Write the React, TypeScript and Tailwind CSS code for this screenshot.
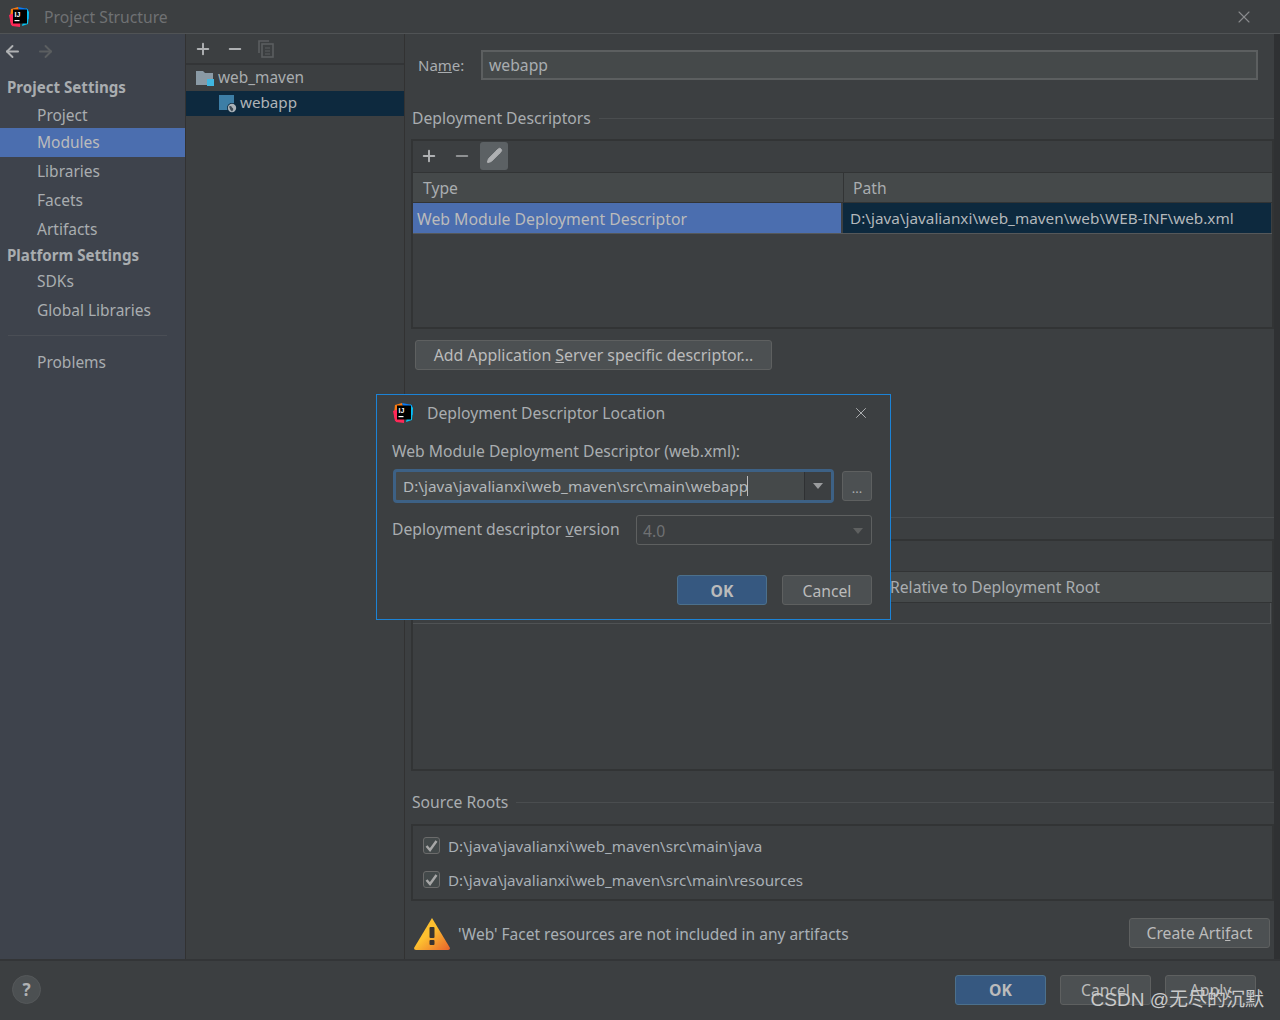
import { ArrowLeft, ArrowRight, Minus, Pencil, Plus, X } from "lucide-react";

const FONT = { fontFamily: '"Noto Sans", "Noto Sans CJK SC", sans-serif' };

function IjLogo({ size = 22 }: { size?: number }) {
  return (
    <svg width={size} height={size} viewBox="0 0 22 22">
      <path d="M3 3 L10 1 L12 8 L2 12 Z" fill="#f97a12" />
      <path d="M10 1 L20 3 L21 13 L14 10 Z" fill="#087cfa" />
      <path d="M18 2 L21 6 L20 18 L14 20 Z" fill="#07c3f2" />
      <path d="M1 9 L9 6 L10 20 L3 19 Z" fill="#fe2857" />
      <path d="M2 14 L12 15 L12 21 L4 20 Z" fill="#fe2857" />
      <rect x="5" y="3.5" width="14" height="14" fill="#000" />
      <text x="6.5" y="10.5" fontSize="7" fontWeight="700" fill="#fff" fontFamily="Liberation Sans, sans-serif">IJ</text>
      <rect x="6.5" y="14" width="5" height="1.2" fill="#fff" />
    </svg>
  );
}

function Btn({ children, primary, className = "" }: { children: React.ReactNode; primary?: boolean; className?: string }) {
  return (
    <div
      className={`flex h-[30px] items-center justify-center rounded-[3px] border text-[15.7px] ${
        primary
          ? "border-[#4c708c] bg-[#365880] font-bold text-[#bbbbbb]"
          : "border-[#5e6060] bg-[#4c5052] text-[#bbbbbb]"
      } ${className}`}
    >
      {children}
    </div>
  );
}

function NavItem({ label, active, className = "h-[29px] pb-[2px]" }: { label: string; active?: boolean; className?: string }) {
  return (
    <div className={`flex items-center pl-[37px] text-[15.5px] ${className} ${active ? "bg-[#4b6eaf] text-[#bbbbbb]" : "text-[#a9adb0]"}`}>
      {label}
    </div>
  );
}

function NavHeader({ label, className }: { label: string; className: string }) {
  return <div className={`flex items-center pl-[7px] text-[15.1px] font-bold text-[#a9adb0] ${className}`}>{label}</div>;
}

function SectionTitle({ label }: { label: string }) {
  return (
    <div className="flex h-[22px] items-center gap-[8px] text-[15.7px] text-[#a9adb0]">
      <span className="whitespace-nowrap">{label}</span>
      <div className="h-px flex-1 bg-[#4a4d4f]" />
    </div>
  );
}

function SourceRoot({ path }: { path: string }) {
  return (
    <div className="flex h-[34px] items-center gap-[8px] pl-[10px] text-[15.2px] text-[#a9b0b6]">
      <span className="flex h-[17px] w-[17px] items-center justify-center rounded-[3px] border border-[#6b6b6b] bg-[#43494a]">
        <svg width="13" height="13" viewBox="0 0 13 13" fill="none" stroke="#a7a7a7" strokeWidth="2.4">
          <path d="M1.5 7 L5 11 L11.5 2" />
        </svg>
      </span>
      <span className="pt-[1px]">{path}</span>
    </div>
  );
}

export default function App() {
  return (
    <div style={FONT} className="relative flex h-[1020px] w-[1280px] flex-col overflow-hidden bg-[#3c3f41] leading-[22px] text-[#bbbbbb]">
      {/* title bar */}
      <div className="flex h-[34px] shrink-0 items-center border-b border-[#505355] bg-[#3c3f41] pl-[8px] pr-[26px]">
        <IjLogo />
        <span className="ml-[14px] text-[15.7px] text-[#6f7173]">Project Structure</span>
        <X size={20} strokeWidth={1.3} className="ml-auto text-[#8a8c8e]" />
      </div>

      <div className="flex min-h-0 flex-1">
        {/* left nav */}
        <div className="flex w-[186px] shrink-0 flex-col border-r border-[#323232] bg-[#3e434c]">
          <div className="flex h-[35px] items-center gap-[14px] pl-[3px]">
            <ArrowLeft size={19} strokeWidth={2.4} className="text-[#afb1b3]" />
            <ArrowRight size={19} strokeWidth={2.4} className="text-[#5b5e60]" />
          </div>
          <div className="mt-[5px]">
            <NavHeader label="Project Settings" className="h-[26px]" />
            <NavItem label="Project" className="h-[28px] pt-[1px]" />
            <NavItem label="Modules" active />
            <NavItem label="Libraries" />
            <NavItem label="Facets" />
            <NavItem label="Artifacts" />
            <NavHeader label="Platform Settings" className="h-[22px]" />
            <div className="pt-[1px]">
              <NavItem label="SDKs" />
              <NavItem label="Global Libraries" />
            </div>
            <div className="ml-[8px] mr-[18px] mt-[10px] h-px bg-[#4a4e55]" />
            <div className="mt-[11px]"><NavItem label="Problems" className="h-[29px]" /></div>
          </div>
        </div>

        {/* module tree */}
        <div className="flex w-[219px] shrink-0 flex-col border-r border-[#323232]">
          <div className="flex h-[31px] items-center gap-[14px] border-b-2 border-[#333537] pl-[8px] pt-[1px]">
            <Plus size={18} strokeWidth={2.6} className="text-[#afb1b3]" />
            <Minus size={18} strokeWidth={2.6} className="text-[#afb1b3]" />
            <svg width="16" height="18" viewBox="0 0 16 18" fill="none" stroke="#5b5e60" strokeWidth="1.6">
              <path d="M1 13 V1 H11" />
              <rect x="4" y="4" width="11" height="13" />
              <path d="M7 8 H12 M7 11 H12 M7 14 H12" strokeWidth="1.2" />
            </svg>
          </div>
          <div className="flex h-[26px] items-center pl-[9px] text-[15.4px] text-[#a9adb0]">
            <svg width="22" height="18" viewBox="0 0 22 18" className="mr-[1px] shrink-0">
              <path d="M1 2 H8 L10 4 H18 V16 H1 Z" fill="#8a9aa5" />
              <rect x="12" y="10" width="7" height="7" fill="#40b6e0" />
            </svg>
            <span>web_maven</span>
          </div>
          <div className="flex h-[25px] items-center bg-[#0d293e] pl-[33px] text-[15.2px] text-[#b0b4b7]">
            <svg width="19" height="19" viewBox="0 0 19 19" className="mr-[2px] shrink-0">
              <rect x="0" y="1" width="15" height="15" fill="#3d7ea6" />
              <circle cx="13" cy="14" r="5" fill="#0d293e" />
              <circle cx="13" cy="14" r="4.2" fill="#aab2b8" />
              <path d="M10 12.5 Q12.5 11 13 13.5 Q15.5 15 13 17.5 Q11 16 10 12.5 Z" fill="#3d4a55" />
            </svg>
            <span className="pb-[4px]">webapp</span>
          </div>
        </div>

        {/* detail panel */}
        <div className="flex w-[869px] shrink-0 flex-col pl-[7px]">
          <div className="mt-[16px] flex items-center pl-[6px]">
            <span className="w-[63px] text-[15px] text-[#a9adb0]">
              Na<span className="underline">m</span>e:
            </span>
            <div className="flex h-[30px] w-[777px] items-center border-2 border-[#5c5f60] bg-[#45494a] pl-[6px] text-[15.7px] text-[#a9adb0]">
              webapp
            </div>
          </div>

          <div className="mt-[27px]">
            <SectionTitle label="Deployment Descriptors" />
          </div>

          <div className="-ml-px mt-[10px] flex h-[190px] flex-col border-2 border-[#323435]">
            <div className="flex h-[32px] shrink-0 items-center border-b border-[#323435] pb-[2px] pl-[7px]">
              <Plus size={18} strokeWidth={2.6} className="text-[#afb1b3]" />
              <Minus size={18} strokeWidth={2.6} className="ml-[15px] text-[#8f9193]" />
              <span className="ml-[9px] flex h-[28px] w-[28px] items-center justify-center rounded-[3px] bg-[#5c6164]">
                <Pencil size={17} fill="#afb1b3" strokeWidth={1.4} className="text-[#afb1b3]" />
              </span>
            </div>
            <div className="flex h-[30px] shrink-0 border-b border-[#323435] bg-[#45494a] text-[15.7px] text-[#a9adb0]">
              <div className="flex w-[431px] items-center border-r border-[#323435] pl-[10px]">Type</div>
              <div className="flex flex-1 items-center pl-[9px]">Path</div>
            </div>
            <div className="flex h-[31px] shrink-0 border-b border-[#55585a]">
              <div className="flex w-[428px] items-center bg-[#4b6eaf] pl-[4px] pt-[1px] text-[15.8px] text-[#bbbbbb]">Web Module Deployment Descriptor</div>
              <div className="ml-[2px] mr-px flex flex-1 items-center bg-[#0d293e] pb-[1px] pl-[7px] text-[15.3px] text-[#b4b8bb]">
                D:\java\javalianxi\web_maven\web\WEB-INF\web.xml
              </div>
            </div>
          </div>

          <Btn className="ml-[3px] mt-[11px] w-[357px]">
            <span className="text-[15.9px]">
              Add Application <span className="underline">S</span>erver specific descriptor...
            </span>
          </Btn>

          {/* title of this section is hidden by the dialog, only its rule shows */}
          <div className="mt-[136px] flex h-[22px] items-center">
            <div className="h-px flex-1 bg-[#4a4d4f]" />
          </div>

          <div className="-ml-px mt-[11px] flex h-[232px] flex-col border-2 border-[#323435]">
            <div className="h-[31px] shrink-0 border-b border-[#323435]" />
            <div className="flex h-[31px] shrink-0 border-b border-[#323435] bg-[#45494a] text-[15.7px] text-[#a9adb0]">
              <div className="w-[476px]" />
              <div className="flex flex-1 items-center pl-[1px]">Relative to Deployment Root</div>
            </div>
            <div className="mr-px h-[21px] shrink-0 border-b border-r border-[#4f5254]" />
          </div>

          <div className="mt-[20px]">
            <SectionTitle label="Source Roots" />
          </div>

          <div className="-ml-px mt-[11px] flex h-[77px] flex-col justify-center border-2 border-[#323435]">
            <SourceRoot path="D:\java\javalianxi\web_maven\src\main\java" />
            <SourceRoot path="D:\java\javalianxi\web_maven\src\main\resources" />
          </div>

          <div className="mt-[16px] flex h-[33px] items-center pl-[2px]">
            <svg width="36" height="33" viewBox="0 0 36 33">
              <defs>
                <linearGradient id="warn" x1="0" y1="0" x2="1" y2="1">
                  <stop offset="0.45" stopColor="#fdc02f" />
                  <stop offset="1" stopColor="#e8622c" />
                </linearGradient>
              </defs>
              <path d="M18 1 L36 31 Q36 33 34 33 H2 Q0 33 0 31 Z" fill="url(#warn)" />
              <rect x="15.5" y="10" width="5" height="11" rx="1" fill="#3a3430" />
              <rect x="15.5" y="23" width="5" height="5" rx="1" fill="#3a3430" />
            </svg>
            <span className="ml-[8px] pt-[1px] text-[15.5px] text-[#a9b0b6]">'Web' Facet resources are not included in any artifacts</span>
            <Btn className="mb-[1px] ml-auto mr-[4px] w-[141px]">
              <span>
                Create Arti<span className="underline">f</span>act
              </span>
            </Btn>
          </div>
        </div>

        {/* window behind */}
        <div className="min-w-0 flex-1 bg-[#2f3133]" />
      </div>

      {/* footer */}
      <div className="flex h-[61px] shrink-0 items-center border-t-2 border-[#333537] pb-[2px] pl-[12px] pr-[24px]">
        <div className="flex h-[29px] w-[29px] items-center justify-center rounded-full border border-[#55585a] bg-[#4c5052] text-[17px] font-bold text-[#b0b2b4]">
          ?
        </div>
        <Btn primary className="ml-auto w-[91px]">OK</Btn>
        <Btn className="ml-[14px] w-[91px]">Cancel</Btn>
        <Btn className="ml-[14px] w-[91px]">Apply</Btn>
      </div>

      {/* dialog */}
      <div className="absolute left-[376px] top-[394px] flex h-[226px] w-[515px] flex-col border border-[#1c83d6] bg-[#3c3f41] pl-[15px] pr-[18px]">
        <div className="mt-[6px] flex h-[24px] items-center">
          <IjLogo />
          <span className="ml-[13px] text-[15.7px] text-[#a9adb0]">Deployment Descriptor Location</span>
          <X size={18} strokeWidth={1.3} className="ml-auto mr-[2px] text-[#afb1b3]" />
        </div>
        <div className="mt-[16px] text-[15.7px] leading-[20px] text-[#a9adb0]">Web Module Deployment Descriptor (web.xml):</div>
        <div className="mt-[8px] flex items-center">
          <div className="ml-px flex h-[34px] w-[441px] items-center rounded-[4px] border-[3px] border-[#3d6185] bg-[#45494a] text-[15.3px] text-[#b4b8bb]">
            <span className="flex flex-1 items-center pl-[7px]">
              D:\java\javalianxi\web_maven\src\main\webapp<span className="-ml-px inline-block h-[20px] border-l border-[#bbbbbb]" />
            </span>
            <span className="flex h-full w-[27px] items-center justify-center border-l border-[#2f3133] bg-[#3c3f41]">
              <span className="h-0 w-0 border-x-[5px] border-t-[6px] border-x-transparent border-t-[#9a9c9e]" />
            </span>
          </div>
          <div className="ml-[8px] flex h-[30px] w-[30px] items-center justify-center rounded-[3px] border border-[#5e6060] bg-[#4c5052] pt-[4px] text-[13px] text-[#a9adb0]">
            ...
          </div>
        </div>
        <div className="mt-[12px] flex items-center">
          <span className="pb-[3px] text-[15.7px] text-[#a9adb0]">
            Deployment descriptor <span className="underline">v</span>ersion
          </span>
          <div className="ml-auto flex h-[30px] w-[236px] items-center justify-between rounded-[3px] border border-[#5e6060] pl-[6px] pr-[8px] pt-[1px] text-[15.7px] text-[#6f7173]">
            4.0
            <span className="h-0 w-0 border-x-[5px] border-t-[6px] border-x-transparent border-t-[#5e6060]" />
          </div>
        </div>
        <div className="mt-[30px] flex justify-end gap-[15px]">
          <Btn primary className="w-[90px] pt-[1px]">OK</Btn>
          <Btn className="w-[90px] pt-[1px]">Cancel</Btn>
        </div>
      </div>

      {/* watermark */}
      <div className="absolute bottom-[9px] right-[16px] text-[19px] text-[#c9cacb]" style={{ fontFamily: '"Liberation Sans", "Noto Sans CJK SC", sans-serif' }}>
        CSDN @无尽的沉默
      </div>
    </div>
  );
}
